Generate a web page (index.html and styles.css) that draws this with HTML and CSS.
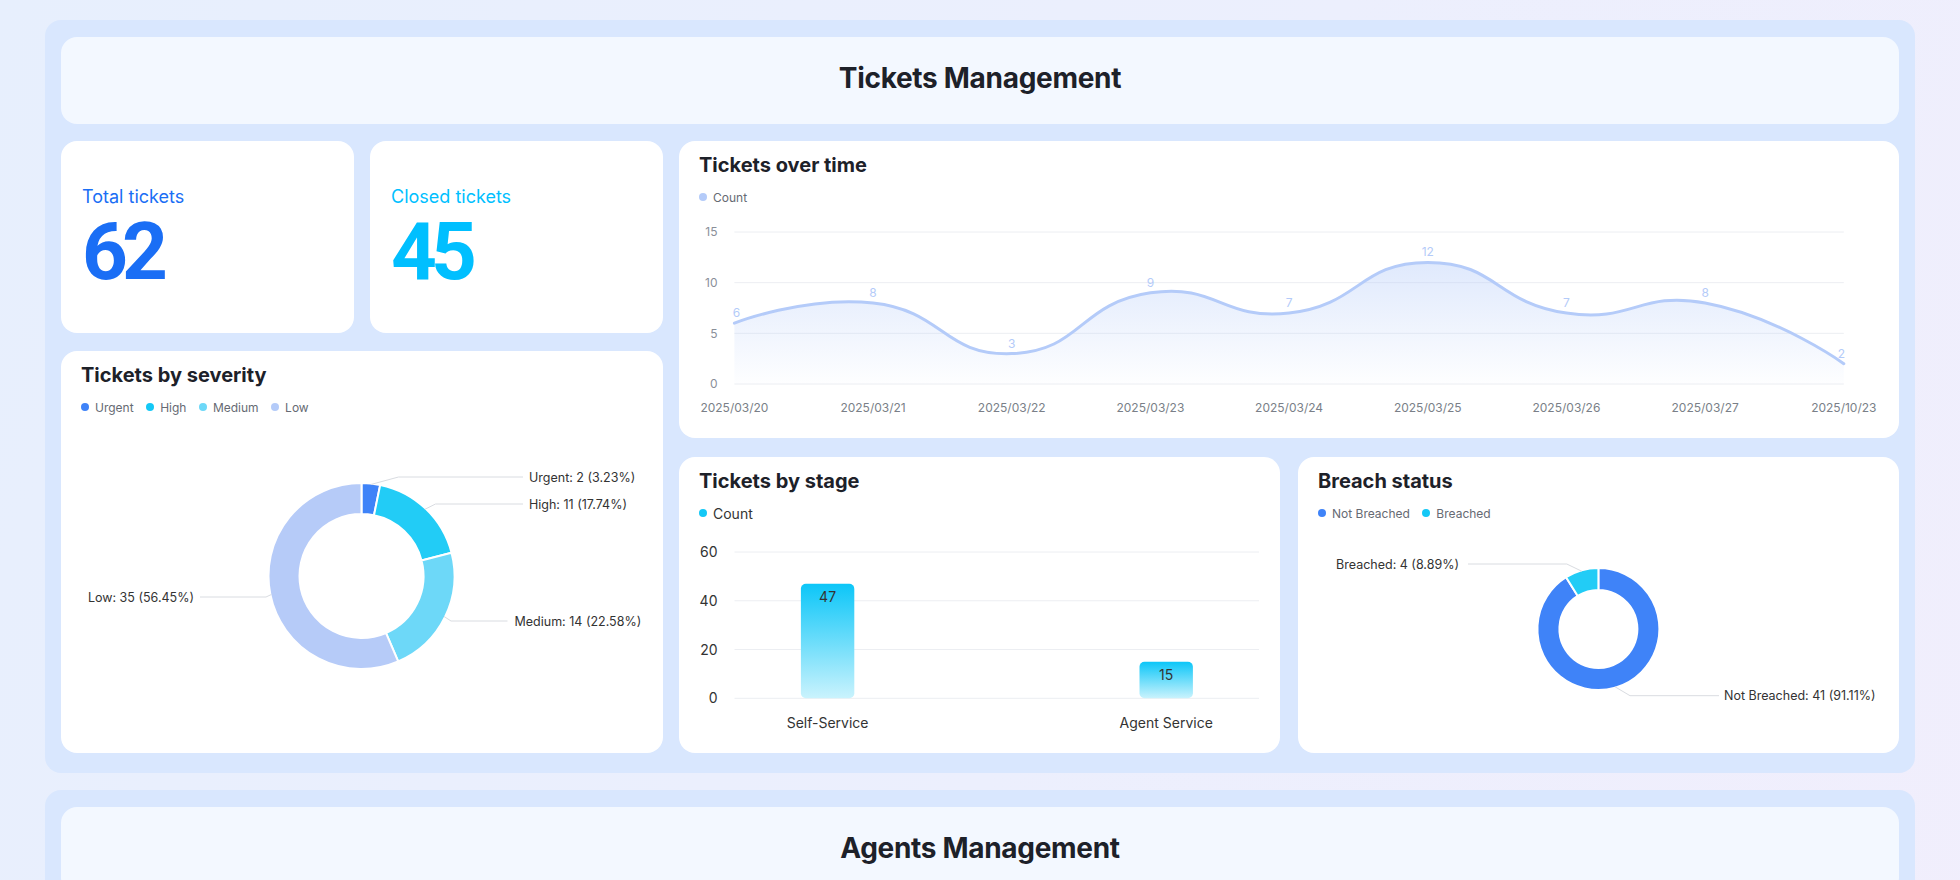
FILE: index.html
```html
<!DOCTYPE html>
<html lang="en">
<head>
<meta charset="utf-8">
<title>Tickets Management</title>
<link rel="stylesheet" href="styles.css">
</head>
<body>
<div class="page">
  <section class="panel">
    <header class="panel-head"><h1>Tickets Management</h1></header>
    <div class="panel-body">
      <div class="col-left">
        <div class="stats">
          <div class="card stat">
            <div class="stat-label c-blue">Total tickets</div>
            <div class="stat-value c-blue">62</div>
          </div>
          <div class="card stat">
            <div class="stat-label c-cyan">Closed tickets</div>
            <div class="stat-value c-cyan">45</div>
          </div>
        </div>
        <div class="card chart severity">
          <h2>Tickets by severity</h2>
          <div class="legend">
            <span class="legend-item"><i class="dot d-urgent"></i>Urgent</span>
            <span class="legend-item"><i class="dot d-high"></i>High</span>
            <span class="legend-item"><i class="dot d-medium"></i>Medium</span>
            <span class="legend-item"><i class="dot d-low"></i>Low</span>
          </div>
          <svg class="plot" width="562" height="326" viewBox="0 0 562 326">
            <g class="pie">
              <path class="f-urgent" d="M280.5 66 A93 93 0 0 1 299.22 67.9 L292.98 98.27 A62 62 0 0 0 280.5 97 Z"/>
              <path class="f-high" d="M299.22 67.9 A93 93 0 0 1 370.53 135.69 L340.52 143.46 A62 62 0 0 0 292.98 98.27 Z"/>
              <path class="f-medium" d="M370.53 135.69 A93 93 0 0 1 317.18 244.46 L304.95 215.98 A62 62 0 0 0 340.52 143.46 Z"/>
              <path class="f-low" d="M317.18 244.46 A93 93 0 1 1 280.5 66 L280.5 97 A62 62 0 1 0 304.95 215.98 Z"/>
            </g>
            <g class="label-lines">
              <polyline points="289.8,67.5 317.5,60 442,60"/>
              <polyline points="343.9,92.3 354.5,87 442,87"/>
              <polyline points="363.1,199.5 370,204 426.5,204"/>
              <polyline points="190.4,177.5 185,180 119,180"/>
            </g>
            <g class="pie-label">
              <text x="448" y="64.5">Urgent: 2 (3.23%)</text>
              <text x="448" y="91.5">High: 11 (17.74%)</text>
              <text x="433.5" y="208.5">Medium: 14 (22.58%)</text>
              <text x="113" y="184.5" text-anchor="end">Low: 35 (56.45%)</text>
            </g>
          </svg>
        </div>
      </div>
      <div class="col-right">
        <div class="card chart overtime">
          <h2>Tickets over time</h2>
          <div class="legend">
            <span class="legend-item"><i class="dot d-low"></i>Count</span>
          </div>
          <svg class="plot" width="1180" height="221" viewBox="0 0 1180 221">
            <defs>
              <linearGradient id="areaGrad" x1="0" y1="0" x2="0" y2="1">
                <stop offset="0" stop-color="#b4cbf9" stop-opacity="0.42"/>
                <stop offset="1" stop-color="#b4cbf9" stop-opacity="0.02"/>
              </linearGradient>
            </defs>
            <g class="grid">
              <line x1="35.4" y1="25" x2="1144.8" y2="25"/>
              <line x1="35.4" y1="75.67" x2="1144.8" y2="75.67"/>
              <line x1="35.4" y1="126.33" x2="1144.8" y2="126.33"/>
              <line x1="35.4" y1="177" x2="1144.8" y2="177"/>
            </g>
            <g class="axis-y">
              <text x="18.5" y="29.3">15</text>
              <text x="18.5" y="80">10</text>
              <text x="18.5" y="130.6">5</text>
              <text x="18.5" y="181.3">0</text>
            </g>
            <path class="area" d="M35.4 116.2 C35.4 116.2 106.55 88.53 174.08 95.93 C245.22 103.73 244.29 149.1 312.75 146.6 C382.96 144.04 379.41 96.32 451.43 85.8 C518.09 76.06 522.57 113.47 590.1 106.07 C661.24 98.27 659.44 55.4 728.78 55.4 C798.12 55.4 796.03 95.63 867.45 106.07 C934.71 115.9 939.75 83.8 1006.13 95.93 C1078.42 109.13 1144.8 156.73 1144.8 156.73 L1144.8 177 L35.4 177 Z"/>
            <path class="line" d="M35.4 116.2 C35.4 116.2 106.55 88.53 174.08 95.93 C245.22 103.73 244.29 149.1 312.75 146.6 C382.96 144.04 379.41 96.32 451.43 85.8 C518.09 76.06 522.57 113.47 590.1 106.07 C661.24 98.27 659.44 55.4 728.78 55.4 C798.12 55.4 796.03 95.63 867.45 106.07 C934.71 115.9 939.75 83.8 1006.13 95.93 C1078.42 109.13 1144.8 156.73 1144.8 156.73"/>
            <g class="point-label">
              <text x="37.5" y="110.2">6</text>
              <text x="174.08" y="89.9">8</text>
              <text x="312.75" y="140.6">3</text>
              <text x="451.43" y="79.8">9</text>
              <text x="590.1" y="100.1">7</text>
              <text x="728.78" y="49.4">12</text>
              <text x="867.45" y="100.1">7</text>
              <text x="1006.13" y="89.9">8</text>
              <text x="1142.5" y="150.7">2</text>
            </g>
            <g class="axis-x">
              <text x="35.4" y="205">2025/03/20</text>
              <text x="174.08" y="205">2025/03/21</text>
              <text x="312.75" y="205">2025/03/22</text>
              <text x="451.43" y="205">2025/03/23</text>
              <text x="590.1" y="205">2025/03/24</text>
              <text x="728.78" y="205">2025/03/25</text>
              <text x="867.45" y="205">2025/03/26</text>
              <text x="1006.13" y="205">2025/03/27</text>
              <text x="1144.8" y="205">2025/10/23</text>
            </g>
          </svg>
        </div>
        <div class="row-bottom">
          <div class="card chart stage">
            <h2>Tickets by stage</h2>
            <div class="legend legend-lg">
              <span class="legend-item"><i class="dot d-high"></i>Count</span>
            </div>
            <svg class="plot" width="561" height="220" viewBox="0 0 561 220">
              <defs>
                <linearGradient id="barGrad" x1="0" y1="0" x2="0" y2="1">
                  <stop offset="0" stop-color="#0cc6f8"/>
                  <stop offset="1" stop-color="#caf3fd"/>
                </linearGradient>
              </defs>
              <g class="grid">
                <line x1="35.5" y1="29" x2="560" y2="29"/>
                <line x1="35.5" y1="77.77" x2="560" y2="77.77"/>
                <line x1="35.5" y1="126.53" x2="560" y2="126.53"/>
                <line x1="35.5" y1="175.3" x2="560" y2="175.3"/>
              </g>
              <g class="axis-y dark">
                <text x="18.5" y="34">60</text>
                <text x="18.5" y="82.8">40</text>
                <text x="18.5" y="131.5">20</text>
                <text x="18.5" y="180.3">0</text>
              </g>
              <rect class="bar" x="101.9" y="60.7" width="53.4" height="114.6" rx="5"/>
              <rect class="bar" x="440.5" y="138.7" width="53.4" height="36.6" rx="5"/>
              <g class="bar-label">
                <text x="128.6" y="78.7">47</text>
                <text x="467.2" y="157">15</text>
              </g>
              <g class="axis-x dark">
                <text x="128.6" y="204.7">Self-Service</text>
                <text x="467.2" y="204.7">Agent Service</text>
              </g>
            </svg>
          </div>
          <div class="card chart breach">
            <h2>Breach status</h2>
            <div class="legend">
              <span class="legend-item"><i class="dot d-urgent"></i>Not Breached</span>
              <span class="legend-item"><i class="dot d-high"></i>Breached</span>
            </div>
            <svg class="plot" width="561" height="220" viewBox="0 0 561 220">
              <g class="pie">
                <path class="f-urgent" d="M280.4 45 A61 61 0 1 1 248.07 54.27 L259.73 72.93 A39 39 0 1 0 280.4 67 Z"/>
                <path class="f-high" d="M248.07 54.27 A61 61 0 0 1 280.4 45 L280.4 67 A39 39 0 0 0 259.73 72.93 Z"/>
              </g>
              <g class="label-lines">
                <polyline points="263.9,48.3 248.8,41 150,41"/>
                <polyline points="296.9,163.7 312,172.7 401,172.7"/>
              </g>
              <g class="pie-label">
                <text x="141" y="45.5" text-anchor="end">Breached: 4 (8.89%)</text>
                <text x="406" y="177">Not Breached: 41 (91.11%)</text>
              </g>
            </svg>
          </div>
        </div>
      </div>
    </div>
  </section>
  <section class="panel">
    <header class="panel-head"><h1>Agents Management</h1></header>
    <div class="panel-body"></div>
  </section>
</div>
</body>
</html>
```
FILE: styles.css
```css
html {
  min-height: 100%;
  background: linear-gradient(115deg, #e7effd 0%, #eceffd 50%, #f2eefc 100%);
}
body {
  margin: 0;
  font-family: Inter, "Noto Sans", sans-serif;
  color: #1d2129;
}
.page {
  padding: 20px 45px;
  display: flex;
  flex-direction: column;
  gap: 17px;
}
.panel {
  background: #d9e7fe;
  border-radius: 16px;
  padding: 17px 16px 20px;
}
.panel-head {
  height: 87px;
  box-sizing: border-box;
  padding-bottom: 6px;
  background: #f3f8ff;
  border-radius: 16px;
  display: flex;
  align-items: center;
  justify-content: center;
}
.panel-head h1 {
  margin: 0;
  font-size: 28px;
  line-height: 34px;
  font-weight: 700;
  letter-spacing: -0.3px;
  color: #1d2129;
}
.panel-body {
  margin-top: 17px;
  height: 612px;
  display: flex;
  gap: 16px;
}
.col-left {
  width: 602px;
  display: flex;
  flex-direction: column;
  gap: 18px;
}
.stats {
  height: 192px;
  display: flex;
  gap: 16px;
}
.col-right {
  flex: 1;
  display: flex;
  flex-direction: column;
  gap: 19px;
}
.row-bottom {
  flex: 1;
  display: flex;
  gap: 18px;
}
.row-bottom .card { flex: 1; }
.overtime { height: 297px; }
.severity { flex: 1; }

.card {
  background: #ffffff;
  border-radius: 16px;
  box-sizing: border-box;
  min-width: 0;
}
.stat {
  flex: 1;
  padding: 44px 21px 0;
}
.stat-label {
  font-size: 18px;
  line-height: 24px;
  font-weight: 400;
}
.stat-value {
  margin-top: 3px;
  font-family: Roboto, "Liberation Sans", sans-serif;
  font-size: 80px;
  line-height: 80px;
  font-weight: 700;
  letter-spacing: -6px;
}
.c-blue { color: #1a6ef5; }
.c-cyan { color: #00bfff; }

.chart {
  padding: 10px 20px;
  display: flex;
  flex-direction: column;
}
.chart h2 {
  margin: 0;
  font-size: 20px;
  line-height: 28px;
  font-weight: 700;
  color: #1d2129;
}
.legend {
  margin-top: 8px;
  height: 20px;
  display: flex;
  align-items: center;
  gap: 12.5px;
  font-size: 12px;
  color: #666a73;
}
.legend-lg {
  font-size: 14px;
  color: #333333;
}
.legend-item {
  display: flex;
  align-items: center;
  gap: 6px;
}
.dot {
  width: 8px;
  height: 8px;
  border-radius: 50%;
  display: block;
}
.d-urgent { background: #3f83f8; }
.d-high { background: #14c8f6; }
.d-medium { background: #6dd8f8; }
.d-low { background: #b4cbf9; }

.plot {
  display: block;
  overflow: visible;
  font-family: Inter, "Noto Sans", sans-serif;
}
.pie path {
  stroke: #ffffff;
  stroke-width: 2;
  stroke-linejoin: round;
}
.f-urgent { fill: #3f83f8; }
.f-high { fill: #22ccf6; }
.f-medium { fill: #6dd8f8; }
.f-low { fill: #b6cbf8; }
.label-lines polyline {
  fill: none;
  stroke: #d9dce1;
  stroke-width: 1;
}
.pie-label text {
  font-size: 12.5px;
  fill: #333333;
}
.grid line {
  stroke: #eceef2;
  stroke-width: 1;
}
.axis-y text {
  font-size: 12px;
  fill: #8a8f99;
  text-anchor: end;
}
.axis-x text {
  font-size: 12px;
  fill: #7a7f88;
  text-anchor: middle;
}
.axis-y.dark text,
.axis-x.dark text {
  font-size: 14px;
  fill: #333333;
}
.area { fill: url(#areaGrad); }
.line {
  fill: none;
  stroke: #b4cbf9;
  stroke-width: 3;
  stroke-linecap: round;
}
.point-label text {
  font-size: 12px;
  fill: #b4cbf9;
  text-anchor: middle;
}
.bar { fill: url(#barGrad); }
.bar-label text {
  font-size: 14px;
  fill: #333333;
  text-anchor: middle;
}
```
